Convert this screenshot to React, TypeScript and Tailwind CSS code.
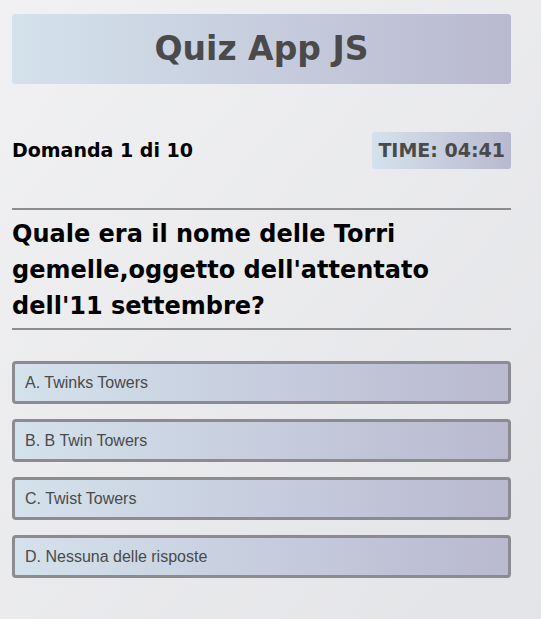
const options = [
  "A. Twinks Towers",
  "B. B Twin Towers",
  "C. Twist Towers",
  "D. Nessuna delle risposte",
];

export default function App() {
  return (
    <div className="min-h-[619px] w-full bg-gradient-to-br from-[#f1f1f3] to-[#e3e4e7] px-3 pt-[14px] pb-10 font-['DejaVu_Sans',sans-serif]">
      <div className="flex h-[70px] w-[499px] items-center justify-center rounded-[3px] bg-gradient-to-r from-[#d4e2ec] to-[#b9b9cf]">
        <h1 className="text-[33px] font-bold text-[#4a4a4a]">Quiz App JS</h1>
      </div>

      <div className="mt-12 flex w-[499px] items-center justify-between">
        <p className="text-[19px] font-bold text-black">Domanda 1 di 10</p>
        <div className="flex h-[37px] items-center rounded-[3px] bg-gradient-to-r from-[#d4e2ec] to-[#b9b9cf] px-[6px] text-[19px] font-bold text-[#4a4a4a]">
          TIME: 04:41
        </div>
      </div>

      <div className="mt-[39px] w-[499px] border-y-2 border-[#8b8b90] pt-[6px] pb-[4px]">
        <h2 className="text-[24px] leading-[36px] font-bold text-black">
          Quale era il nome delle Torri gemelle,oggetto dell'attentato dell'11 settembre?
        </h2>
      </div>

      <div className="mt-[31px] flex w-[499px] flex-col gap-[15px]">
        {options.map((o) => (
          <button
            key={o}
            className="flex h-[43px] items-center rounded-[4px] border-[3px] border-[#8b8b91] bg-gradient-to-r from-[#d4e2ec] to-[#b9b9cf] px-[10px] text-left font-['Liberation_Sans',sans-serif] text-[16px] text-[#4a4a4a]"
          >
            {o}
          </button>
        ))}
      </div>
    </div>
  );
}
